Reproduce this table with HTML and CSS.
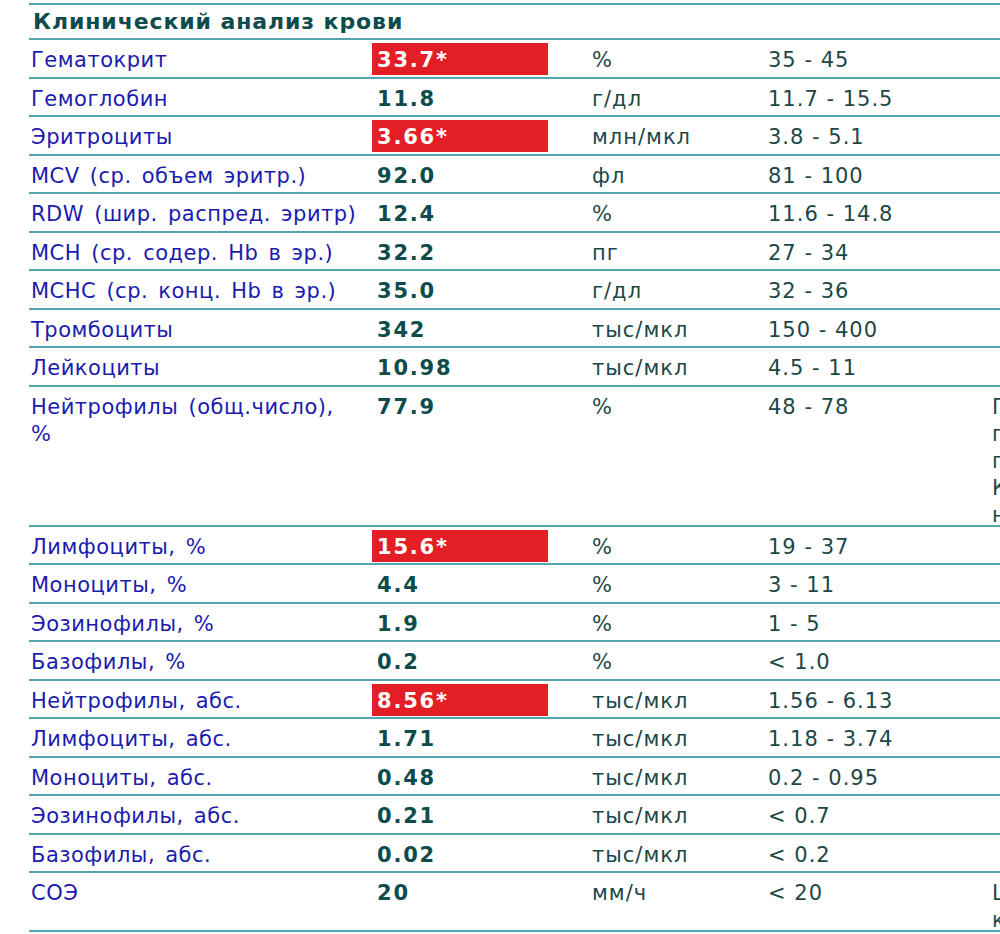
FILE: index.html
```html
<!DOCTYPE html>
<html lang="ru">
<head>
<meta charset="utf-8">
<link rel="stylesheet" href="styles.css">
</head>
<body>
<div class="report">
  <div class="row head"><div class="title">Клинический анализ крови</div><div class="c5"></div></div>
  <div class="row"><div class="name">Гематокрит</div><div class="val"><span class="flag">33.7*</span></div><div class="unit">%</div><div class="ref">35 - 45</div><div class="c5"></div></div>
  <div class="row"><div class="name">Гемоглобин</div><div class="val"><span>11.8</span></div><div class="unit">г/дл</div><div class="ref">11.7 - 15.5</div><div class="c5"></div></div>
  <div class="row"><div class="name">Эритроциты</div><div class="val"><span class="flag">3.66*</span></div><div class="unit">млн/мкл</div><div class="ref">3.8 - 5.1</div><div class="c5"></div></div>
  <div class="row"><div class="name">MCV (ср. объем эритр.)</div><div class="val"><span>92.0</span></div><div class="unit">фл</div><div class="ref">81 - 100</div><div class="c5"></div></div>
  <div class="row"><div class="name">RDW (шир. распред. эритр)</div><div class="val"><span>12.4</span></div><div class="unit">%</div><div class="ref">11.6 - 14.8</div><div class="c5"></div></div>
  <div class="row"><div class="name">MCH (ср. содер. Hb в эр.)</div><div class="val"><span>32.2</span></div><div class="unit">пг</div><div class="ref">27 - 34</div><div class="c5"></div></div>
  <div class="row"><div class="name">MCHC (ср. конц. Hb в эр.)</div><div class="val"><span>35.0</span></div><div class="unit">г/дл</div><div class="ref">32 - 36</div><div class="c5"></div></div>
  <div class="row"><div class="name">Тромбоциты</div><div class="val"><span>342</span></div><div class="unit">тыс/мкл</div><div class="ref">150 - 400</div><div class="c5"></div></div>
  <div class="row"><div class="name">Лейкоциты</div><div class="val"><span>10.98</span></div><div class="unit">тыс/мкл</div><div class="ref">4.5 - 11</div><div class="c5"></div></div>
  <div class="row tall"><div class="name">Нейтрофилы (общ.число),<br>%</div><div class="val"><span>77.9</span></div><div class="unit">%</div><div class="ref">48 - 78</div><div class="c5 note">П<br>п<br>п<br>К<br>н</div></div>
  <div class="row"><div class="name">Лимфоциты, %</div><div class="val"><span class="flag">15.6*</span></div><div class="unit">%</div><div class="ref">19 - 37</div><div class="c5"></div></div>
  <div class="row"><div class="name">Моноциты, %</div><div class="val"><span>4.4</span></div><div class="unit">%</div><div class="ref">3 - 11</div><div class="c5"></div></div>
  <div class="row"><div class="name">Эозинофилы, %</div><div class="val"><span>1.9</span></div><div class="unit">%</div><div class="ref">1 - 5</div><div class="c5"></div></div>
  <div class="row"><div class="name">Базофилы, %</div><div class="val"><span>0.2</span></div><div class="unit">%</div><div class="ref">&lt; 1.0</div><div class="c5"></div></div>
  <div class="row"><div class="name">Нейтрофилы, абс.</div><div class="val"><span class="flag">8.56*</span></div><div class="unit">тыс/мкл</div><div class="ref">1.56 - 6.13</div><div class="c5"></div></div>
  <div class="row"><div class="name">Лимфоциты, абс.</div><div class="val"><span>1.71</span></div><div class="unit">тыс/мкл</div><div class="ref">1.18 - 3.74</div><div class="c5"></div></div>
  <div class="row"><div class="name">Моноциты, абс.</div><div class="val"><span>0.48</span></div><div class="unit">тыс/мкл</div><div class="ref">0.2 - 0.95</div><div class="c5"></div></div>
  <div class="row"><div class="name">Эозинофилы, абс.</div><div class="val"><span>0.21</span></div><div class="unit">тыс/мкл</div><div class="ref">&lt; 0.7</div><div class="c5"></div></div>
  <div class="row"><div class="name">Базофилы, абс.</div><div class="val"><span>0.02</span></div><div class="unit">тыс/мкл</div><div class="ref">&lt; 0.2</div><div class="c5"></div></div>
  <div class="row soe"><div class="name">СОЭ</div><div class="val"><span>20</span></div><div class="unit">мм/ч</div><div class="ref">&lt; 20</div><div class="c5 note">L<br>к</div></div>
</div>
</body>
</html>
```
FILE: styles.css
```css
html, body {
  margin: 0;
  padding: 0;
  background: #ffffff;
  overflow: hidden;
}
body {
  font-family: "DejaVu Sans", Verdana, sans-serif;
  width: 1000px;
  height: 934px;
}
.report {
  margin-left: 29px;
  margin-top: 3px;
  width: 1100px;
  border-top: 2px solid #55a5b0;
}
.row {
  display: grid;
  grid-template-columns: 343px 178px 214px 220px 145px;
  height: 36.5px;
  border-bottom: 2px solid #55a5b0;
  font-size: 21px;
  line-height: 27px;
}
.row > div {
  padding-top: 7px;
  white-space: nowrap;
  overflow: hidden;
}
.row .c5 {
  padding-left: 8px;
}
.row.head {
  grid-template-columns: 955px 145px;
  height: 33px;
}
.title {
  font-weight: bold;
  color: #0e4b4b;
  padding-left: 4px;
  padding-top: 3px !important;
  font-size: 22px;
  letter-spacing: 0.9px;
}
.name {
  color: #1b1bae;
  padding-left: 2px;
  letter-spacing: 0.5px;
  word-spacing: 3px;
}
.val {
  padding-top: 3px !important;
}
.val span {
  display: block;
  height: 32px;
  margin-right: 2px;
  padding-left: 5px;
  padding-top: 4px;
  box-sizing: border-box;
  font-weight: bold;
  color: #0e4b4b;
  letter-spacing: 1.8px;
}
.val span.flag {
  background: #e31e24;
  color: #ffffff;
}
.unit {
  color: #1d4747;
  padding-left: 42px;
  letter-spacing: 1px;
}
.ref {
  color: #1d4747;
  padding-left: 4px;
  letter-spacing: 1px;
}
.note {
  color: #1d4747;
}
.row.tall {
  height: 138px;
}
.row.soe {
  height: 57px;
}
```
